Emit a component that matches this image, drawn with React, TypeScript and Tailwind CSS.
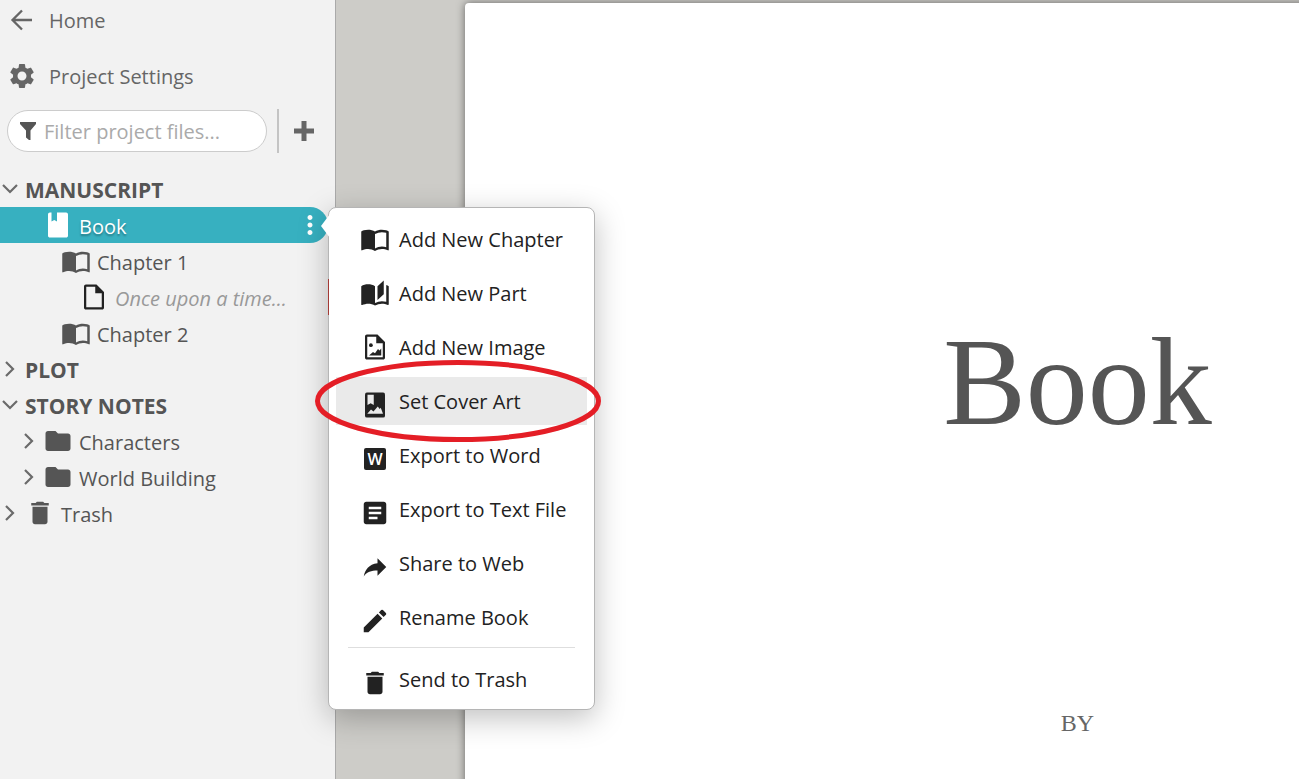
import { useState } from "react";
import type { ReactNode } from "react";
import { MdArticle, MdDelete, MdEdit, MdFolder, MdMoreVert, MdSettings } from "react-icons/md";

const ICON = "size-[30px] shrink-0";

function Chevron({ open = false }: { open?: boolean }) {
  return (
    <svg viewBox="0 0 20 20" className="size-5 shrink-0" fill="none" stroke="#6b6b6b" strokeWidth="2.2">
      <path d={open ? "M3 6l7 7 7-7" : "M6 3l7 7-7 7"} />
    </svg>
  );
}

function ChapterIcon() {
  return (
    <svg viewBox="0 0 24 24" className={ICON} fill="currentColor" fillRule="evenodd">
      <path d="M12 21.5C10.65 20.65 8.2 20 6.5 20C4.85 20 3.15 20.3 1.75 21.05C1.65 21.1 1.6 21.1 1.5 21.1C1.25 21.1 1 20.85 1 20.6V6C1.6 5.55 2.25 5.25 3 5C4.11 4.65 5.33 4.5 6.5 4.5C8.45 4.5 10.55 4.9 12 6C13.45 4.9 15.55 4.5 17.5 4.5C18.67 4.5 19.89 4.65 21 5C21.75 5.25 22.4 5.55 23 6V20.6C23 20.85 22.75 21.1 22.5 21.1C22.4 21.1 22.35 21.1 22.25 21.05C20.85 20.3 19.15 20 17.5 20C15.8 20 13.35 20.65 12 21.5M12 8V19.5C13.35 18.65 15.8 18 17.5 18C18.7 18 19.9 18.15 21 18.5V7C19.9 6.65 18.7 6.5 17.5 6.5C15.8 6.5 13.35 7.15 12 8Z" />
    </svg>
  );
}

function PartIcon() {
  return (
    <svg viewBox="0 0 24 24" className={ICON} fill="currentColor">
      <path d="M19 2L14 6.5V17.5L19 13V2M6.5 5C4.55 5 2.45 5.4 1 6.5V21.16C1 21.41 1.25 21.66 1.5 21.66C1.6 21.66 1.65 21.59 1.75 21.59C3.1 20.94 5.05 20.5 6.5 20.5C8.45 20.5 10.55 20.9 12 22C13.35 21.15 15.8 20.5 17.5 20.5C19.15 20.5 20.85 20.81 22.25 21.56C22.35 21.61 22.4 21.59 22.5 21.59C22.75 21.59 23 21.34 23 21.09V6.5C22.4 6.05 21.75 5.75 21 5.5V19C19.9 18.65 18.7 18.5 17.5 18.5C15.8 18.5 13.35 19.15 12 20V6.5C10.55 5.4 8.45 5 6.5 5Z" />
    </svg>
  );
}

function FileIcon({ picture = false }: { picture?: boolean }) {
  return (
    <svg viewBox="0 0 24 24" className={ICON} fill="#222">
      <path
        fillRule="evenodd"
        d="M5.5 2H14l6 6v12.5c0 .8-.7 1.5-1.500 1.5h-13c-.8 0-1.500-.7-1.500-1.500v-17C4 2.700 4.700 2 5.500 2zM5.800 3.800v16.400h12.400V9H13V3.800z"
      />
      {picture && (
        <>
          <circle cx="8.700" cy="10.500" r="1.500" />
          <path d="M7.200 18.800l3.200-2.800 1.600 1 2.400-3.500 1.200 1.200 1.400-1.500v5.600z" />
        </>
      )}
    </svg>
  );
}

function BookIcon() {
  return (
    <svg viewBox="0 0 24 24" className={ICON} fill="currentColor">
      <path d="M5.500 2H6.800v7.200l2.200-1.200 2.200 1.200V2h7.300c.8 0 1.500.7 1.500 1.500v17c0 .8-.7 1.500-1.500 1.500h-13c-.8 0-1.500-.7-1.500-1.500v-17C4 2.700 4.700 2 5.500 2z" />
    </svg>
  );
}

function CoverIcon() {
  return (
    <svg viewBox="0 0 24 24" className={ICON}>
      <rect x="4" y="2" width="16" height="20" rx="1.500" fill="#222" />
      <path d="M6 3.800h5v8.200l-2.500-1.400L6 12z" fill="#eaeaea" />
      <path d="M5.800 19l3-3.400 2 1.600 3.400-4 1.600 2 .8-1 1.800 4.800z" fill="#eaeaea" />
    </svg>
  );
}

function WordIcon() {
  return (
    <span aria-hidden="true" className="mx-1 flex size-[22px] items-center justify-center rounded-xs bg-[#222] text-base font-semibold leading-none text-white">
      W
    </span>
  );
}

function ShareIcon() {
  return (
    <svg viewBox="0 0 24 24" className={ICON} fill="currentColor">
      <path d="M14 5l7 7-7 7v-4.200C9 14.800 5.500 16 3 19.500c1-5 4-9.700 11-10.500z" />
    </svg>
  );
}

type RowProps = {
  label: string;
  indent?: string;
  chevron?: "open" | "closed";
  icon?: ReactNode;
  gap?: string;
  heading?: boolean;
  muted?: boolean;
};

function TreeRow({ label, indent = "pl-0", chevron, icon, gap = "ml-[5px]", heading, muted }: RowProps) {
  return (
    <li>
      <button type="button" className={`flex h-9 w-full items-center ${indent}`}>
        {chevron && <Chevron open={chevron === "open"} />}
        {icon}
        <span className={`pt-1 ${gap} ${heading ? "text-[21px] font-bold" : ""} ${muted ? "italic text-[#999]" : ""}`}>
          {label}
        </span>
      </button>
    </li>
  );
}

type MenuItemProps = { label: string; icon: ReactNode; active?: boolean; lowIcon?: boolean };

function MenuItem({ label, icon, active, lowIcon }: MenuItemProps) {
  return (
    <button
      type="button"
      role="menuitem"
      className={`flex h-12 w-full items-center gap-[9px] pl-6 text-left hover:bg-[#eaeaea] ${active ? "bg-[#eaeaea]" : ""}`}
    >
      <span className={lowIcon ? "mt-2" : ""}>{icon}</span>
      <span className="pt-0.5">{label}</span>
    </button>
  );
}

function BookMenu() {
  return (
    <div
      role="menu"
      className="absolute left-[328px] top-0 z-10 w-[267px] rounded-lg border border-[#b5b5b5] bg-white px-[7px] pb-1.5 pt-[7px] text-[#222] shadow-[0_8px_30px_rgba(0,0,0,0.25)]"
    >
      <svg viewBox="0 0 9 24" className="absolute -left-2 top-1.5 h-6 w-[9px]" fill="#fff">
        <path d="M9 0L0 12l9 12z" />
      </svg>
      <div className="absolute -left-px top-[71px] h-9 w-px bg-[#a33a35]" />
      <div className="flex flex-col gap-1.5">
        <MenuItem label="Add New Chapter" icon={<ChapterIcon />} />
        <MenuItem label="Add New Part" icon={<PartIcon />} />
        <MenuItem label="Add New Image" icon={<FileIcon picture />} />
        <MenuItem label="Set Cover Art" icon={<CoverIcon />} active lowIcon />
        <MenuItem label="Export to Word" icon={<WordIcon />} lowIcon />
        <MenuItem label="Export to Text File" icon={<MdArticle className={ICON} />} lowIcon />
        <MenuItem label="Share to Web" icon={<ShareIcon />} lowIcon />
        <MenuItem label="Rename Book" icon={<MdEdit className={ICON} />} lowIcon />
      </div>
      <hr className="mx-3 mb-[7px] mt-1.5 border-[#dedede]" />
      <MenuItem label="Send to Trash" icon={<MdDelete className={ICON} />} lowIcon />
      <svg viewBox="0 0 286 82" className="pointer-events-none absolute -left-[14px] top-[152px] h-[82px] w-[286px]" fill="none">
        <ellipse cx="143" cy="41" rx="140.500" ry="38.500" stroke="#e41e26" strokeWidth="5" />
      </svg>
    </div>
  );
}

export default function App() {
  const [filter, setFilter] = useState("");

  return (
    <div className="flex h-screen overflow-hidden bg-[#cdccc8] font-['Open_Sans',sans-serif] text-xl text-[#555]">
      <aside className="relative z-10 w-[336px] shrink-0 border-r border-[#aaa] bg-[#f2f2f2]">
        <nav className="text-[#666]">
          <a href="#home" className="flex h-[42px] items-center gap-3 pl-[7px]">
            <svg viewBox="0 0 30 30" className={ICON} fill="none" stroke="currentColor" strokeWidth="2.300">
              <path d="M25 14H6M15 4.500L5.500 14l9.500 9.500" />
            </svg>
            Home
          </a>
          <a href="#settings" className="flex h-[67px] items-center gap-3 pl-[7px]">
            <MdSettings className={ICON} />
            <span className="pt-0.5">Project Settings</span>
          </a>
        </nav>

        <div className="flex items-center pl-[7px]">
          <label className="flex h-[42px] w-[260px] items-center gap-2 rounded-full border border-[#ccc] bg-white pl-3">
            <svg viewBox="0 0 16 18" className="h-[18px] w-4 shrink-0" fill="#555">
              <path d="M0 0h16v2l-5.500 6.500V18H9l-3-2.500v-7L0 2z" />
            </svg>
            <input
              type="text"
              aria-label="Filter project files"
              placeholder="Filter project files..."
              value={filter}
              onChange={(e) => setFilter(e.target.value)}
              className="w-full min-w-0 bg-transparent pt-0.5 outline-none placeholder:text-[#aaa]"
            />
          </label>
          <div className="ml-2.5 h-11 w-0.5 bg-[#c4c4c4]" />
          <button type="button" aria-label="Add" className="ml-[15px]">
            <svg viewBox="0 0 20 20" className="size-5" fill="#666">
              <path d="M7.500 0h5v7.500H20v5h-7.500V20h-5v-7.500H0v-5h7.500z" />
            </svg>
          </button>
        </div>

        <ul className="mt-[18px]">
          <TreeRow label="MANUSCRIPT" chevron="open" heading />
          <li className="relative">
            <div className="flex h-9 w-[328px] items-center rounded-r-full bg-[#37b0c0] text-white">
              <button type="button" className="flex h-full grow items-center gap-1.5 pl-[43px] [text-shadow:0_2px_2px_rgba(0,0,0,0.3)]">
                <BookIcon />
                <span className="pt-1">Book</span>
              </button>
              <button type="button" aria-label="Book options" className="mr-[3px]">
                <MdMoreVert className={ICON} />
              </button>
            </div>
            <BookMenu />
          </li>
          <TreeRow label="Chapter 1" indent="pl-[61px]" icon={<ChapterIcon />} gap="ml-1.5" />
          <TreeRow label="Once upon a time..." indent="pl-[79px]" icon={<FileIcon />} gap="ml-1.5" muted />
          <TreeRow label="Chapter 2" indent="pl-[61px]" icon={<ChapterIcon />} gap="ml-1.5" />
          <TreeRow label="PLOT" chevron="closed" heading />
          <TreeRow label="STORY NOTES" chevron="open" heading />
          <TreeRow label="Characters" indent="pl-[19px]" chevron="closed" icon={<MdFolder className="ml-1 size-[30px] shrink-0" />} gap="ml-1.5" />
          <TreeRow label="World Building" indent="pl-[19px]" chevron="closed" icon={<MdFolder className="ml-1 size-[30px] shrink-0" />} gap="ml-1.5" />
          <TreeRow label="Trash" chevron="closed" icon={<MdDelete className="ml-[5px] size-[30px] shrink-0" />} gap="ml-1.5" />
        </ul>
      </aside>

      <main className="grow overflow-hidden pl-[129px] pt-[3px]">
        {/* the sheet keeps its print width and runs off the right edge */}
        <article className="flex h-[1600px] w-[1225px] flex-col items-center rounded-sm bg-white pt-[308px] font-['Liberation_Serif',serif] shadow-[0_0_8px_rgba(0,0,0,0.5)]">
          <h1 className="text-[124px] leading-[144px]">Book</h1>
          <p className="mt-[252px] text-2xl leading-8 text-[#666]">BY</p>
        </article>
      </main>
    </div>
  );
}
